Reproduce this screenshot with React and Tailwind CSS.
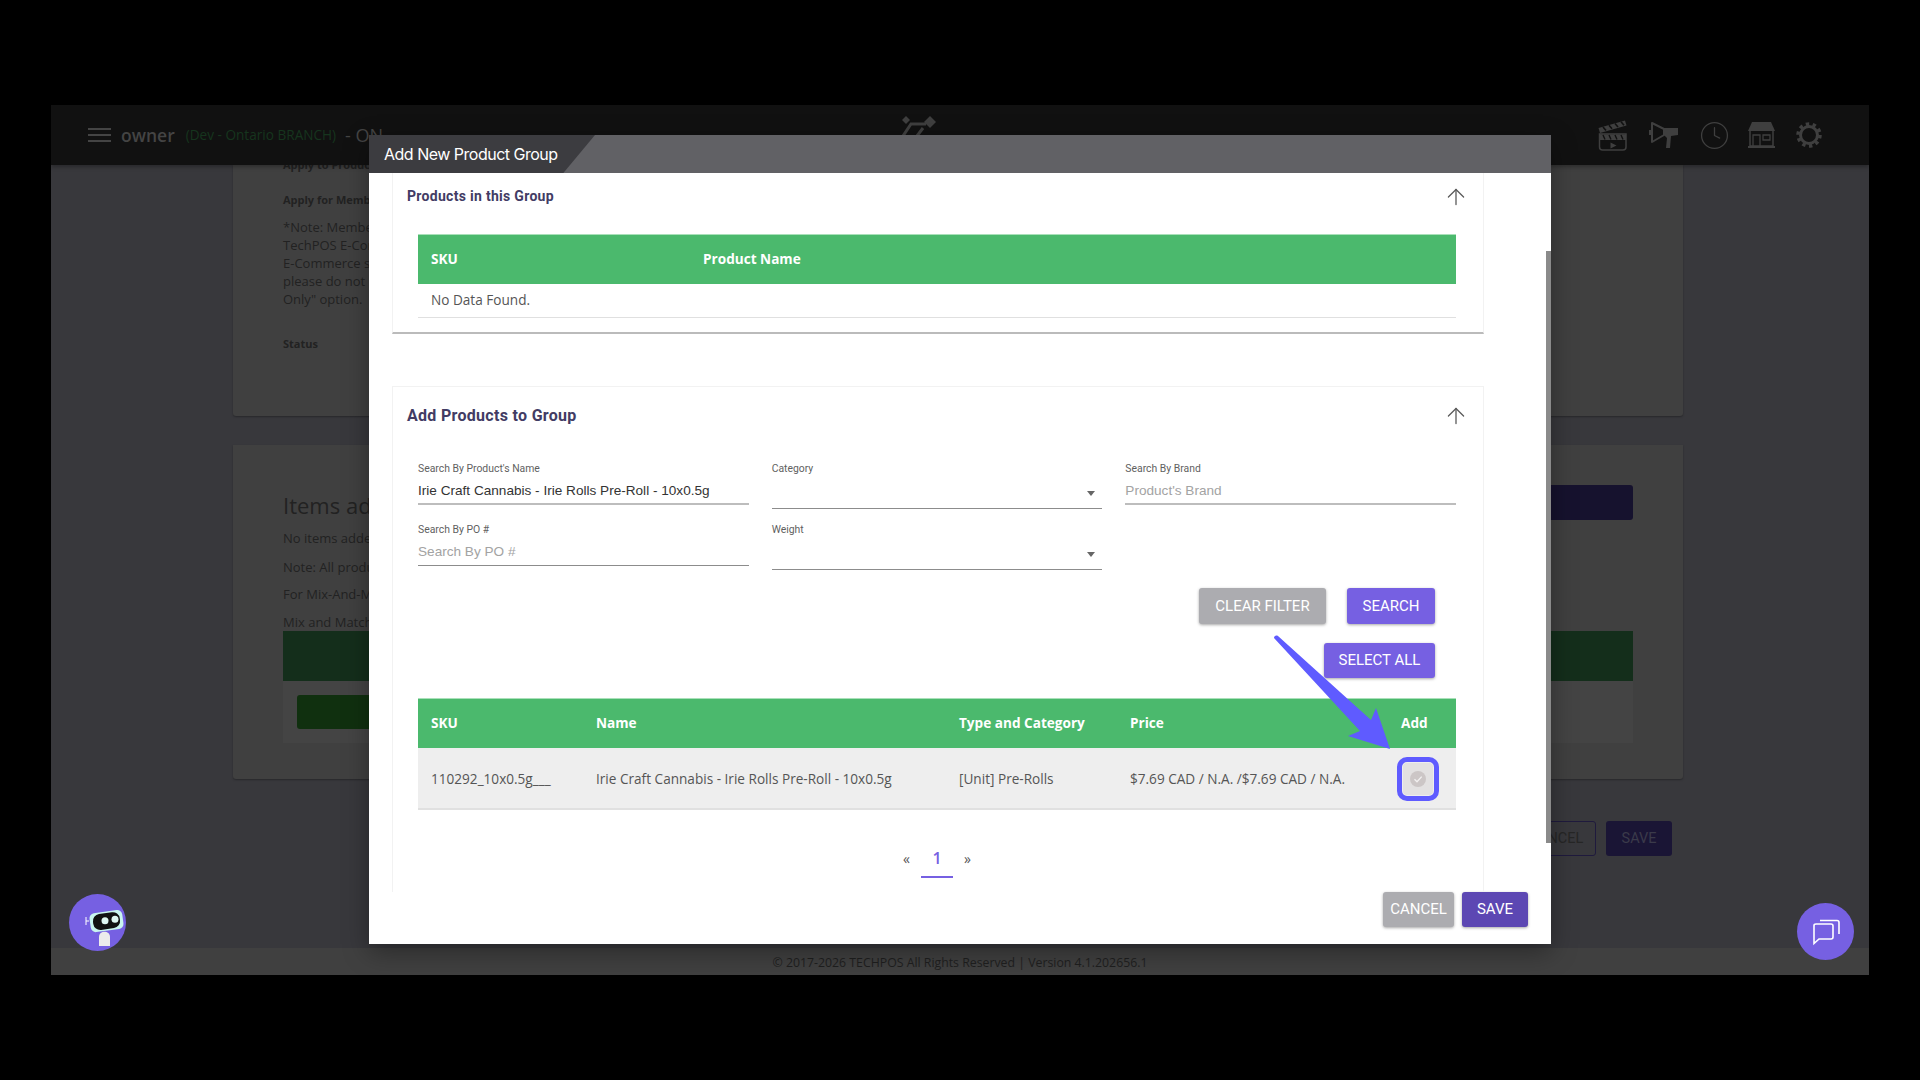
import React from 'react';
import { ArrowUp, Clock } from 'lucide-react';

const open = "font-['Open_Sans',sans-serif]";
const roboto = "font-['Roboto',sans-serif]";

const HeaderIcons = () => (
  <div className="flex items-center text-[#3f3f3f]">
    {/* clapperboard */}
    <span className="w-[54px] flex justify-center">
      <svg width="29" height="31" viewBox="0 0 29 31" fill="none">
        <path d="M0.5 8 L27 0.5 L28.5 5.5 L2 13 Z" fill="currentColor" />
        <path d="M5 7 L8 10.5 M11 5.2 L14 8.8 M17 3.5 L20 7 M23 1.8 L26 5.3" stroke="#111111" strokeWidth="1.6" />
        <path d="M1.5 14 H28 V27 Q28 30 25 30 H4.5 Q1.5 30 1.5 27 Z" stroke="currentColor" strokeWidth="1.5" />
        <path d="M1.5 14.5 H28 V20 H1.5 Z" fill="currentColor" />
        <path d="M5 15 L7 19.5 M11 15 L13 19.5 M17 15 L19 19.5 M23 15 L25 19.5" stroke="#111111" strokeWidth="1.4" />
        <path d="M12.5 22.5 L18.5 25.5 L12.5 28.5 Z" fill="currentColor" />
      </svg>
    </span>
    {/* megaphone */}
    <span className="w-[51px] flex justify-center">
      <svg width="31" height="28" viewBox="0 0 31 28" fill="none">
        <path d="M3 2 L3 21 L15 14 L15 8 Z" stroke="currentColor" strokeWidth="2" strokeLinejoin="round" />
        <path d="M15 7 H29 V14 L22 15 L21 27 H17 L18 17 L15 14 Z" fill="currentColor" />
        <path d="M1 9 V14" stroke="currentColor" strokeWidth="2" />
      </svg>
    </span>
    <span className="w-[48px] flex justify-center">
      <Clock className="w-[31px] h-[31px]" strokeWidth={1} />
    </span>
    {/* shop */}
    <span className="w-[47px] flex justify-center">
      <svg width="27" height="26" viewBox="0 0 27 26" fill="none">
        <path d="M4 0 H23 L27 9 H0 Z" fill="currentColor" />
        <path d="M2 9 V24 H25 V9" stroke="currentColor" strokeWidth="1.5" />
        <path d="M0 25 H27" stroke="currentColor" strokeWidth="2" />
        <path d="M5 24 V13 H12 V24 M15 13 H22 V18 H15 Z" stroke="currentColor" strokeWidth="1.3" />
      </svg>
    </span>
    {/* gear */}
    <span className="w-[47px] flex justify-center">
      <svg width="26" height="26" viewBox="0 0 26 26" fill="none">
        <circle cx="13" cy="13" r="8.5" stroke="currentColor" strokeWidth="3" />
        <circle cx="13" cy="13" r="11" stroke="currentColor" strokeWidth="3.5" strokeDasharray="3.4 3.5" />
      </svg>
    </span>
  </div>
);

const TopBar = () => (
  <header className="h-[60px] shrink-0 bg-[#111111] flex items-center justify-between pl-[37px] pr-[37px] shadow-[0_2px_4px_rgba(0,0,0,0.3)] relative z-10">
    <div className={`flex items-center ${open}`}>
      <div className="w-[23px] flex flex-col gap-[4px] mr-[10px]">
        <span className="h-[2px] bg-[#444444]" />
        <span className="h-[2px] bg-[#444444]" />
        <span className="h-[2px] bg-[#444444]" />
      </div>
      <span className="text-[17.5px] font-semibold text-[#444444] mr-[11px]">owner</span>
      <span className="text-[13.6px] text-[#16351e] mr-[9px]">(Dev - Ontario BRANCH)</span>
      <span className="text-[18px] text-[#444444]">- ON</span>
    </div>
    <HeaderIcons />
  </header>
);

// the dimmed page that sits behind the dialog
const BackgroundPage = () => (
  <main className={`flex-1 overflow-hidden bg-[#38383c] pl-[182px] pr-[186px] text-[#222222] ${open}`}>
    <div className="h-[251px] bg-[#404040] rounded-b-[3px] pl-[50px] shadow-[0_1px_2px_rgba(0,0,0,0.3)] overflow-hidden">
      <p className="text-[11px] font-bold leading-[16px] -mt-[8px]">Apply to Product</p>
      <p className="text-[11px] font-bold leading-[16px] mt-[19px]">Apply for Membership</p>
      <div className="text-[13px] leading-[18px] mt-[10px]">
        <p>*Note: Membership</p>
        <p>TechPOS E-Commerce</p>
        <p>E-Commerce store</p>
        <p>please do not</p>
        <p>Only" option.</p>
      </div>
      <p className="text-[11px] font-bold leading-[16px] mt-[28px]">Status</p>
    </div>
    <div className="h-[334px] mt-[29px] bg-[#404040] rounded-b-[3px] pl-[50px] pr-[50px] pt-[42px] shadow-[0_1px_2px_rgba(0,0,0,0.3)]">
      <div className="flex justify-between items-start h-[36px]">
        <p className="text-[22px] leading-[36px]">Items added</p>
        <div className="w-[200px] h-[35px] -mt-[2px] bg-[#16122e] rounded-[3px]" />
      </div>
      <p className="text-[13px] leading-[18px] mt-[6px]">No items added</p>
      <p className="text-[13px] leading-[18px] mt-[11px]">Note: All products</p>
      <p className="text-[13px] leading-[18px] mt-[9px]">For Mix-And-Match</p>
      <p className="text-[13px] leading-[18px] mt-[10px]">Mix and Match</p>
      <div className="h-[50px] bg-[#142e1b]" />
      <div className="h-[62px] bg-[#444444] px-[14px] pt-[14px]">
        <div className="w-[120px] h-[34px] bg-[#10300f] rounded-[3px]" />
      </div>
    </div>
    <div className="flex justify-end gap-[10px] mt-[42px] pr-[11px] text-[14.5px] font-['Roboto',sans-serif]">
      <div className="w-[80px] h-[35px] rounded-[3px] border border-[#1f1a3d] flex items-center justify-center text-[#262626]">CANCEL</div>
      <div className="w-[66px] h-[35px] rounded-[3px] bg-[#1a1535] flex items-center justify-center text-[#3a3a4a]">SAVE</div>
    </div>
  </main>
);

const TableHead = ({ children, className = '' }) => (
  <div className={`h-[50px] bg-[#4bb96d] border-t border-[#a9e0b9] flex items-center pl-[13px] text-[13.6px] font-bold text-white ${open} ${className}`}>
    {children}
  </div>
);

const CollapseArrow = () => <ArrowUp className="w-[26px] h-[26px] text-[#5a5a5a]" strokeWidth={1.2} />;

const Field = ({ label, value, placeholder, underline = 'border-b-2 border-[#bdbdbd]' }) => (
  <div>
    <p className={`text-[10.4px] leading-[14px] text-[#5f5f5f] ${roboto}`}>{label}</p>
    <div className={`h-[27px] mt-[2px] pt-[1px] flex items-center text-[13.6px] font-['Liberation_Sans',sans-serif] ${underline} ${value ? 'text-[#333333]' : 'text-[#a3a3a3]'}`}>
      {value || placeholder}
    </div>
  </div>
);

const SelectField = ({ label }) => (
  <div>
    <p className={`text-[10.4px] leading-[14px] text-[#5f5f5f] ${roboto}`}>{label}</p>
    <div className="h-[31px] mt-[2px] border-b border-[#8c8c8c] flex items-center justify-end pr-[7px]">
      <span className="w-0 h-0 border-x-[4px] border-x-transparent border-t-[5px] border-t-[#666666]" />
    </div>
  </div>
);

const Btn = ({ children, className = '' }) => (
  <button className={`rounded-[3px] text-[15px] font-normal text-white shadow-[0_1px_3px_rgba(0,0,0,0.35)] font-['Roboto',sans-serif] ${className}`}>
    {children}
  </button>
);

const GroupCard = () => (
  <section className="h-[161px] border-x border-[#f2f2f2] border-b-2 border-b-[#bbbbbb] pl-[25px] pr-[27px]">
    <div className="h-[47px] -ml-[11px] -mr-[13px] flex items-center justify-between">
      <h3 className={`text-[14px] font-bold text-[#423c64] tracking-[0.3px] ${roboto}`}>Products in this Group</h3>
      <CollapseArrow />
    </div>
    <div className="mt-[14px]">
      <TableHead>
        <span className="w-[272px]">SKU</span>
        <span>Product Name</span>
      </TableHead>
      <div className={`h-[34px] border-b border-[#e0e0e0] pl-[13px] flex items-center text-[13.6px] text-[#555555] ${open}`}>No Data Found.</div>
    </div>
  </section>
);

const AddProductsCard = () => (
  <section className="h-[506px] mt-[52px] border-x border-t border-[#f2f2f2] pl-[25px] pr-[27px] relative">
    <div className="h-[58px] -ml-[11px] -mr-[13px] flex items-center justify-between">
      <h3 className={`text-[16px] font-bold text-[#423c64] tracking-[0.3px] ${roboto}`}>Add Products to Group</h3>
      <CollapseArrow />
    </div>
    <div className="grid grid-cols-3 gap-x-[23px] mt-[17px]">
      <Field label="Search By Product's Name" value="Irie Craft Cannabis - Irie Rolls Pre-Roll - 10x0.5g" />
      <SelectField label="Category" />
      <Field label="Search By Brand" placeholder="Product's Brand" />
    </div>
    <div className="grid grid-cols-3 gap-x-[23px] mt-[14px]">
      <Field label="Search By PO #" placeholder="Search By PO #" underline="border-b border-[#8c8c8c]" />
      <SelectField label="Weight" />
    </div>
    <div className="flex justify-end gap-[21px] mt-[18px] pr-[21px]">
      <Btn className="w-[127px] h-[36px] bg-[#acacb0]">CLEAR FILTER</Btn>
      <Btn className="w-[88px] h-[36px] bg-[#7660e2]">SEARCH</Btn>
    </div>
    <div className="flex justify-end mt-[19px] pr-[21px]">
      <Btn className="w-[111px] h-[35px] bg-[#7660e2]">SELECT ALL</Btn>
    </div>
    <div className="mt-[20px]">
      <TableHead>
        <span className="w-[165px]">SKU</span>
        <span className="w-[363px]">Name</span>
        <span className="w-[171px]">Type and Category</span>
        <span className="w-[271px]">Price</span>
        <span>Add</span>
      </TableHead>
      <div className={`h-[62px] pt-[2px] bg-[#eeeeee] border-b-2 border-[#e0e0e0] pl-[13px] flex items-center text-[13.6px] text-[#555555] ${open}`}>
        <span className="w-[165px]">110292_10x0.5g___</span>
        <span className="w-[363px]">Irie Craft Cannabis - Irie Rolls Pre-Roll - 10x0.5g</span>
        <span className="w-[171px]">[Unit] Pre-Rolls</span>
        <span className="w-[267px]">$7.69 CAD / N.A. /$7.69 CAD / N.A.</span>
        <span className="w-[42px] h-[44px] rounded-[10px] border-[5px] border-[#5f5bff] flex items-center justify-center">
          <span className="w-[30px] h-[32px] rounded-[4px] bg-[#e3e1e1] flex items-center justify-center shrink-0">
            <svg width="16" height="16" viewBox="0 0 16 16">
              <circle cx="8" cy="8" r="8" fill="#ccc6c6" />
              <path d="M4.5 8.2 L7 10.7 L11.7 5.6" fill="none" stroke="#f2f0f0" strokeWidth="1.4" />
            </svg>
          </span>
        </span>
      </div>
    </div>
    <div className={`flex items-center justify-center mt-[32px] text-[#555555] ${open}`}>
      <span className="text-[14px] -mt-[3px]">«</span>
      <span className="w-[32px] h-[36px] mx-[11px] pt-[4px] text-center text-[16px] font-semibold text-[#7660e2] border-b-2 border-[#7660e2]">1</span>
      <span className="text-[14px] -mt-[3px]">»</span>
    </div>
  </section>
);

const Dialog = () => (
  <div className="absolute left-[318px] top-[30px] w-[1182px] h-[809px] bg-white flex flex-col shadow-[0_8px_24px_rgba(0,0,0,0.35)] z-20">
    <div className="h-[38px] shrink-0 bg-[#616165] flex">
      <div className="w-[226px] bg-[#3c3c40] [clip-path:polygon(0_0,100%_0,86%_100%,0_100%)] flex items-center pl-[15px]">
        <span className="text-[16px] text-white tracking-[-0.5px] whitespace-nowrap font-['Inter',sans-serif]">Add New Product Group</span>
      </div>
    </div>
    <div className="h-[719px] shrink-0 overflow-hidden pl-[23px] pr-[67px]">
      <GroupCard />
      <AddProductsCard />
    </div>
    <div className="flex-1 flex justify-end items-start gap-[8px] pr-[23px]">
      <Btn className="w-[71px] h-[35px] bg-[#acacb0]">CANCEL</Btn>
      <Btn className="w-[66px] h-[35px] bg-[#5c47b3]">SAVE</Btn>
    </div>
    {/* scrollbar thumb */}
    <div className="absolute right-0 top-[116px] w-[5px] h-[592px] bg-[#8a8a8a]" />
  </div>
);

const RobotBadge = () => (
  <div className="absolute left-[18px] top-[789px] w-[57px] h-[57px] rounded-full bg-[#7660e2] z-10">
    <svg width="57" height="57" viewBox="0 0 57 57">
      <path d="M17 23 V31 M17 27 H20" stroke="#ffffff" strokeWidth="1" fill="none" />
      <rect x="21" y="17.5" width="33" height="19" rx="5" transform="rotate(-8 38 27)" fill="#c9f5ef" />
      <rect x="24" y="19" width="27" height="16" rx="7" transform="rotate(-8 38 27)" fill="#111111" />
      <circle cx="36" cy="26.7" r="3.5" fill="#dff7f2" />
      <circle cx="46" cy="25.3" r="3.5" fill="#dff7f2" />
      <path d="M30 52 V43 C30 36 41 36 41 43 V52 Z" fill="#ececec" />
    </svg>
  </div>
);

const ChatBadge = () => (
  <div className="absolute left-[1746px] top-[798px] w-[57px] h-[57px] rounded-full bg-[#7660e2] flex items-center justify-center z-10">
    <svg width="28" height="28" viewBox="0 0 28 28" fill="none" stroke="#ffffff" strokeWidth="1.6">
      <path d="M2 7.5 Q2 6 4 6 H19 Q21 6 21 8 V19 Q21 21 19 21 H7 L2 25.5 Z" />
      <path d="M8 2.5 H25 Q27 2.5 27 4.5 V16" />
    </svg>
  </div>
);

// annotation arrow pointing at the Add checkbox, drawn over the page
const PointerArrow = () => (
  <svg className="absolute left-[1220px] top-[525px] z-30" width="120" height="120" viewBox="0 0 120 120">
    <path d="M3 8 C3 6 5 5 7 6 L100 90 L105 78 L119 119 L77 106 L89 101 Z" fill="#5f5bff" />
  </svg>
);

const App = () => (
  <div className="w-[1920px] h-[1080px] bg-black pl-[51px] pr-[51px] pt-[105px] pb-[105px] overflow-hidden">
    <div className="relative w-[1818px] h-[870px] flex flex-col overflow-hidden">
      <TopBar />
      {/* logo peeks out above the dialog */}
      <svg className="absolute left-[851px] top-[11px] z-10" width="36" height="20" viewBox="0 0 36 20" fill="#3f3f3f">
        <path d="M0 4 L4 0 L8 4 L4 8 Z" />
        <path d="M22 6 L28 0 L34 6 L28 12 Z" />
        <path d="M1 20 L9 8 H24 M15 20 L21 12" fill="none" stroke="#3f3f3f" strokeWidth="3" />
      </svg>
      <span className={`absolute left-[879px] top-[22px] z-10 text-[22px] leading-[28px] font-bold tracking-[1px] text-[#3f3f3f] ${open}`}>TECHPOS</span>
      <BackgroundPage />
      <footer className={`h-[27px] shrink-0 bg-[#404040] pt-[3px] flex items-center justify-center text-[12.3px] text-[#1f1f1f] ${open}`}>
        © 2017-2026 TECHPOS All Rights Reserved | Version 4.1.202656.1
      </footer>
      <Dialog />
      <RobotBadge />
      <ChatBadge />
      <PointerArrow />
    </div>
  </div>
);

export default App;
